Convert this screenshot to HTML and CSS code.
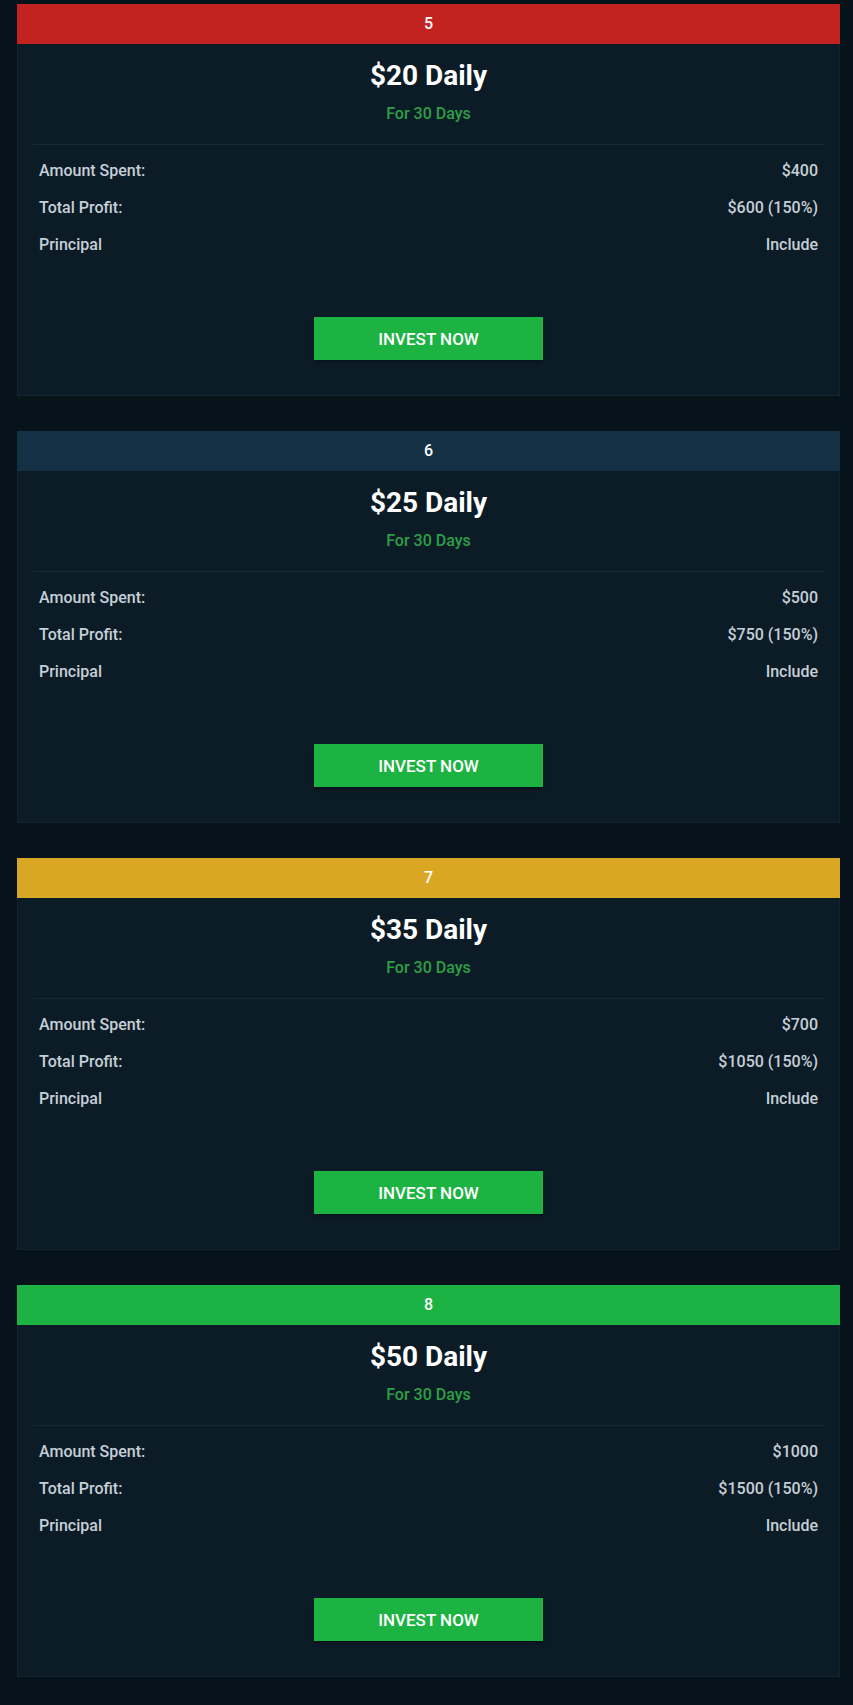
FILE: index.html
```html
<!DOCTYPE html>
<html lang="en">
<head>
    <meta charset="UTF-8">
    <meta name="viewport" content="width=device-width, initial-scale=1.0">
    <title>Investment Plans</title>
    <link rel="stylesheet" href="styles.css">
</head>
<body>
    <div class="plans">
        <div class="plan-card">
            <div class="plan-header red">5</div>
            <h2 class="plan-title">$20 Daily</h2>
            <div class="plan-duration">For 30 Days</div>
            <div class="plan-divider"></div>
            <div class="plan-row"><span>Amount Spent:</span><span>$400</span></div>
            <div class="plan-row"><span>Total Profit:</span><span>$600 (150%)</span></div>
            <div class="plan-row"><span>Principal</span><span>Include</span></div>
            <button class="invest-btn">INVEST NOW</button>
        </div>

        <div class="plan-card">
            <div class="plan-header navy">6</div>
            <h2 class="plan-title">$25 Daily</h2>
            <div class="plan-duration">For 30 Days</div>
            <div class="plan-divider"></div>
            <div class="plan-row"><span>Amount Spent:</span><span>$500</span></div>
            <div class="plan-row"><span>Total Profit:</span><span>$750 (150%)</span></div>
            <div class="plan-row"><span>Principal</span><span>Include</span></div>
            <button class="invest-btn">INVEST NOW</button>
        </div>

        <div class="plan-card">
            <div class="plan-header gold">7</div>
            <h2 class="plan-title">$35 Daily</h2>
            <div class="plan-duration">For 30 Days</div>
            <div class="plan-divider"></div>
            <div class="plan-row"><span>Amount Spent:</span><span>$700</span></div>
            <div class="plan-row"><span>Total Profit:</span><span>$1050 (150%)</span></div>
            <div class="plan-row"><span>Principal</span><span>Include</span></div>
            <button class="invest-btn">INVEST NOW</button>
        </div>

        <div class="plan-card">
            <div class="plan-header green">8</div>
            <h2 class="plan-title">$50 Daily</h2>
            <div class="plan-duration">For 30 Days</div>
            <div class="plan-divider"></div>
            <div class="plan-row"><span>Amount Spent:</span><span>$1000</span></div>
            <div class="plan-row"><span>Total Profit:</span><span>$1500 (150%)</span></div>
            <div class="plan-row"><span>Principal</span><span>Include</span></div>
            <button class="invest-btn">INVEST NOW</button>
        </div>
    </div>
</body>
</html>
```

FILE: styles.css
```css
body {
    margin: 0;
    background-color: #07131a;
    font-family: Roboto, 'Liberation Sans', sans-serif;
    color: #c6cfd7;
}
.plans {
    padding: 4px 13px 26px 17px;
}
.plan-card {
    background: #0c1c27;
    border: 1px solid #132430;
    border-top: none;
    margin-bottom: 35px;
    padding-bottom: 35px;
    text-align: center;
}
.plan-header {
    height: 40px;
    line-height: 40px;
    margin: 0 -1px;
    color: #fff;
    font-size: 16px;
    font-weight: 500;
}
.red { background-color: #c22320; }
.navy { background-color: #143045; }
.gold { background-color: #d9a723; }
.green { background-color: #1db244; }
.plan-title {
    margin: 14px 0 0;
    line-height: 36px;
    font-size: 28px;
    font-weight: 700;
    color: #fff;
}
.plan-duration {
    margin-top: 9px;
    line-height: 22px;
    font-size: 16px;
    font-weight: 500;
    color: #2e9f45;
}
.plan-divider {
    height: 1px;
    margin: 19px 15px 7px;
    background: #182834;
}
.plan-row {
    display: flex;
    justify-content: space-between;
    padding: 0 21px;
    line-height: 37px;
    font-size: 16px;
    font-weight: 500;
}
.invest-btn {
    display: block;
    width: 229px;
    height: 43px;
    margin: 54px auto 0;
    border: none;
    background-color: #1db343;
    color: #fff;
    font-family: inherit;
    font-size: 17px;
    font-weight: 500;
    box-shadow: 0 3px 4px rgba(0,0,0,0.3);
    cursor: pointer;
}
```
